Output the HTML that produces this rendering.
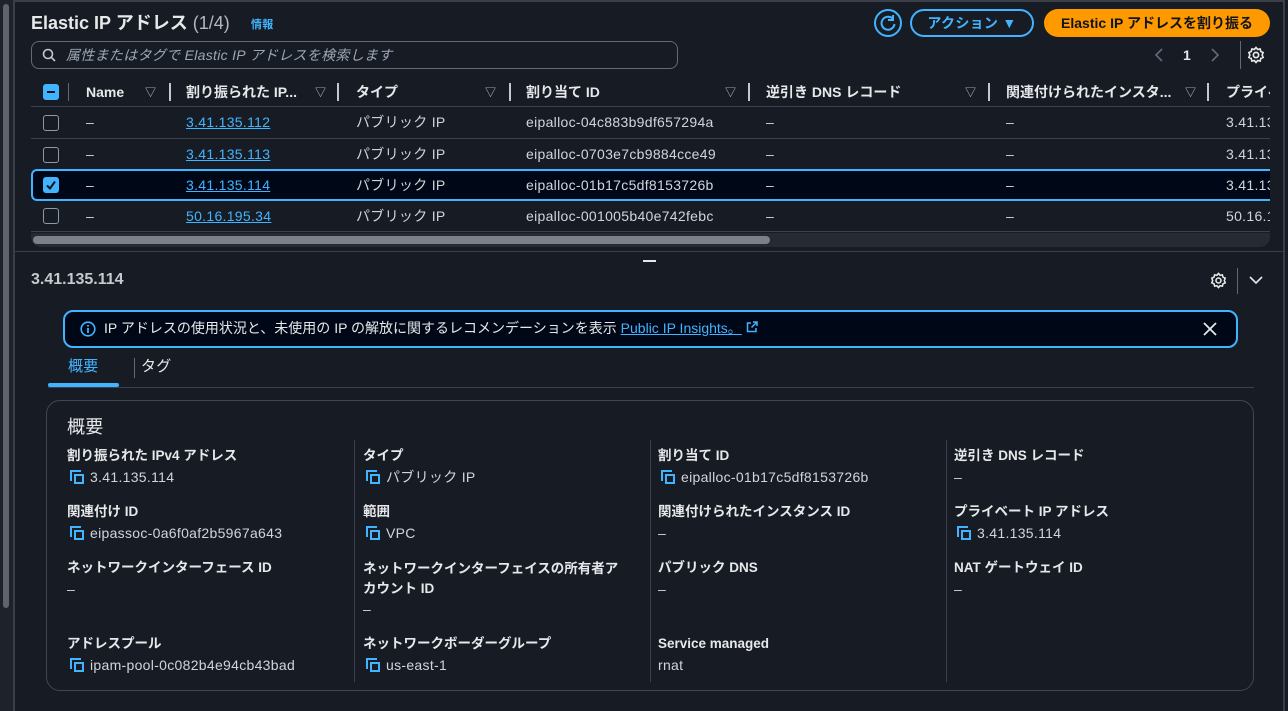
<!DOCTYPE html>
<html><head><meta charset="utf-8">
<style>
*{box-sizing:border-box;margin:0;padding:0}
body{width:1288px;height:711px;overflow:hidden;background:#171c24;color:#d1d5db;font-family:"Liberation Sans","Noto Sans CJK JP",sans-serif;font-size:14px;letter-spacing:.3px;position:relative;line-height:18px}
.a{position:absolute;white-space:nowrap;line-height:18px}
.lnk{color:#42b4ff;text-decoration:underline}
.b{font-weight:bold;color:#e6e8ea;letter-spacing:0}
.cb{position:absolute;width:16px;height:16px;border:1.5px solid #8d99a8;border-radius:3px;left:43px}
.sep{position:absolute;width:2px;height:18px;background:#c6c6cd;top:83px}
.tri{position:absolute;top:84px;font-size:11px;color:#c6c6cd}
.rowl{position:absolute;left:31px;width:1239px;height:1px;background:#3a404c}
.vl{position:absolute;width:1px;background:#3a404c;top:440px;height:242px}
.lab{font-weight:bold;color:#e6e8ea;font-size:13.5px;letter-spacing:0}
.cp{display:inline-block;width:14px;height:14px;position:relative;vertical-align:-2px;margin-right:6px}
.cp:before{content:"";position:absolute;left:0;top:0;width:9px;height:9px;border-left:2px solid #42b4ff;border-top:2px solid #42b4ff}
.cp:after{content:"";position:absolute;left:4px;top:4px;width:10px;height:10px;border:2px solid #42b4ff;box-sizing:border-box}
</style></head><body>
<div class="a" style="left:0;top:0;width:14px;height:711px;background:#1e232b"></div>
<div class="a" style="left:3px;top:4px;width:6px;height:604px;background:#5f636b;border-radius:3px"></div>
<div class="a" style="left:13px;top:0;width:2px;height:711px;background:#3a3f47"></div>
<div class="a" style="left:1283px;top:0;width:2px;height:711px;background:#3a3f47"></div>
<div class="a" style="left:13px;top:0;width:1272px;height:2px;background:#3a3f47"></div>

<div class="a" style="left:31px;top:12px;font-size:18px;line-height:22px;color:#e6e8ea;font-weight:bold;letter-spacing:0">Elastic IP アドレス <span style="font-weight:normal;color:#b4b8bd">(1/4)</span></div>
<div class="a" style="left:251px;top:16px;font-size:11px;color:#42b4ff;font-weight:bold">情報</div>

<svg class="a" style="left:873px;top:8px" width="30" height="30" viewBox="0 0 30 30"><circle cx="15" cy="15" r="13" fill="none" stroke="#42b4ff" stroke-width="2"/><path d="M20 11a6.5 6.5 0 1 0 1.5 5" fill="none" stroke="#42b4ff" stroke-width="2"/><path d="M20 7v5h-5" fill="none" stroke="#42b4ff" stroke-width="2"/></svg>
<div class="a" style="left:910px;top:9px;width:124px;height:28px;border:2px solid #42b4ff;border-radius:14px;color:#42b4ff;font-weight:bold;font-size:14px;text-align:center;line-height:24px">アクション ▼</div>
<div class="a" style="left:1044px;top:9px;width:226px;height:28px;background:#ff9900;border-radius:14px;color:#0f141a;font-weight:bold;font-size:14px;letter-spacing:0;text-align:center;line-height:28px">Elastic IP アドレスを割り振る</div>

<div class="a" style="left:31px;top:41px;width:647px;height:28px;border:1px solid #5f6b7a;border-radius:8px"></div>
<svg class="a" style="left:42px;top:48px" width="14" height="14" viewBox="0 0 14 14"><circle cx="6" cy="6" r="4.5" fill="none" stroke="#c6c6cd" stroke-width="1.6"/><path d="M9.3 9.3L13 13" stroke="#c6c6cd" stroke-width="1.6"/></svg>
<div class="a" style="left:66px;top:46px;font-style:italic;color:#9ba7b6;font-size:14px">属性またはタグで Elastic IP アドレスを検索します</div>

<svg class="a" style="left:1154px;top:47px" width="10" height="16" viewBox="0 0 10 16"><path d="M8 2L2 8l6 6" fill="none" stroke="#5f6b7a" stroke-width="1.6"/></svg>
<div class="a" style="left:1183px;top:46px;color:#e6e8ea;font-weight:bold">1</div>
<svg class="a" style="left:1210px;top:47px" width="10" height="16" viewBox="0 0 10 16"><path d="M2 2l6 6-6 6" fill="none" stroke="#5f6b7a" stroke-width="1.6"/></svg>
<div class="a" style="left:1240px;top:41px;width:1px;height:28px;background:#5f6b7a"></div>
<svg class="a" style="left:1247px;top:46px" width="18" height="18" viewBox="0 0 24 24"><path d="M12 2l2.2 2.6 3.3-.6.9 3.3 3.1 1.4-1.3 3.3 1.3 3.3-3.1 1.4-.9 3.3-3.3-.6L12 22l-2.2-2.6-3.3.6-.9-3.3-3.1-1.4L3.8 12 2.5 8.7l3.1-1.4.9-3.3 3.3.6z" fill="none" stroke="#e6e8ea" stroke-width="2.2"/><circle cx="12" cy="12" r="3.5" fill="none" stroke="#e6e8ea" stroke-width="2.2"/></svg>

<div class="a" style="left:43px;top:84px;width:16px;height:16px;background:#42b4ff;border-radius:3px"><div style="position:absolute;left:4px;top:7px;width:8px;height:2px;background:#0f141a"></div></div>
<div class="a" style="left:68px;top:83px;width:1px;height:18px;background:#5f6b7a"></div>
<div class="a b" style="left:86px;top:83px">Name</div><div class="tri" style="left:145px">▽</div><div class="sep" style="left:169px"></div>
<div class="a b" style="left:186px;top:83px">割り振られた IP...</div><div class="tri" style="left:315px">▽</div><div class="sep" style="left:337px"></div>
<div class="a b" style="left:356px;top:83px">タイプ</div><div class="tri" style="left:485px">▽</div><div class="sep" style="left:509px"></div>
<div class="a b" style="left:526px;top:83px">割り当て ID</div><div class="tri" style="left:725px">▽</div><div class="sep" style="left:748px"></div>
<div class="a b" style="left:766px;top:83px">逆引き DNS レコード</div><div class="tri" style="left:965px">▽</div><div class="sep" style="left:988px"></div>
<div class="a b" style="left:1006px;top:83px">関連付けられたインスタ...</div><div class="tri" style="left:1185px">▽</div><div class="sep" style="left:1207px"></div>
<div class="a b" style="left:1226px;top:83px;width:44px;overflow:hidden">プライベ</div>

<div class="rowl" style="top:106px"></div>
<div class="rowl" style="top:138px"></div>
<div class="rowl" style="top:231px"></div>
<div class="a" style="left:31px;top:169px;width:1239px;height:32px;background:#000716;border:2px solid #42b4ff;border-right:none;border-radius:6px 0 0 6px"></div>

<div class="cb" style="top:115px"></div>
<div class="cb" style="top:147px"></div>
<div class="a" style="left:43px;top:177px;width:16px;height:16px;background:#42b4ff;border-radius:3px"><svg width="16" height="16" viewBox="0 0 16 16" style="position:absolute;left:0;top:0"><path d="M4 8.5l3 3 5-7" fill="none" stroke="#0f141a" stroke-width="2"/></svg></div>
<div class="cb" style="top:208px"></div>

<div class="a" style="left:86px;top:113px">–</div><div class="a lnk" style="left:186px;top:113px">3.41.135.112</div><div class="a" style="left:356px;top:113px">パブリック IP</div><div class="a" style="left:526px;top:113px">eipalloc-04c883b9df657294a</div><div class="a" style="left:766px;top:113px">–</div><div class="a" style="left:1006px;top:113px">–</div><div class="a" style="left:1226px;top:113px;width:44px;overflow:hidden">3.41.135</div>
<div class="a" style="left:86px;top:145px">–</div><div class="a lnk" style="left:186px;top:145px">3.41.135.113</div><div class="a" style="left:356px;top:145px">パブリック IP</div><div class="a" style="left:526px;top:145px">eipalloc-0703e7cb9884cce49</div><div class="a" style="left:766px;top:145px">–</div><div class="a" style="left:1006px;top:145px">–</div><div class="a" style="left:1226px;top:145px;width:44px;overflow:hidden">3.41.135</div>
<div class="a" style="left:86px;top:176px">–</div><div class="a lnk" style="left:186px;top:176px">3.41.135.114</div><div class="a" style="left:356px;top:176px">パブリック IP</div><div class="a" style="left:526px;top:176px">eipalloc-01b17c5df8153726b</div><div class="a" style="left:766px;top:176px">–</div><div class="a" style="left:1006px;top:176px">–</div><div class="a" style="left:1226px;top:176px;width:44px;overflow:hidden">3.41.135</div>
<div class="a" style="left:86px;top:207px">–</div><div class="a lnk" style="left:186px;top:207px">50.16.195.34</div><div class="a" style="left:356px;top:207px">パブリック IP</div><div class="a" style="left:526px;top:207px">eipalloc-001005b40e742febc</div><div class="a" style="left:766px;top:207px">–</div><div class="a" style="left:1006px;top:207px">–</div><div class="a" style="left:1226px;top:207px;width:44px;overflow:hidden">50.16.195</div>

<div class="a" style="left:31px;top:233px;width:1239px;height:14px;background:#262b33;border-radius:0 0 10px 10px"></div>
<div class="a" style="left:33px;top:236px;width:737px;height:8px;background:#7d8187;border-radius:4px"></div>

<div class="a" style="left:13px;top:251px;width:1272px;height:1px;background:#3a3f47"></div>
<div class="a" style="left:643px;top:260px;width:13px;height:2px;background:#e6e8ea"></div>

<div class="a" style="left:31px;top:271px;font-size:16px;font-weight:bold;color:#c6c9cd;letter-spacing:0">3.41.135.114</div>
<svg class="a" style="left:1210px;top:272px" width="17" height="17" viewBox="0 0 24 24"><path d="M12 2l2.2 2.6 3.3-.6.9 3.3 3.1 1.4-1.3 3.3 1.3 3.3-3.1 1.4-.9 3.3-3.3-.6L12 22l-2.2-2.6-3.3.6-.9-3.3-3.1-1.4L3.8 12 2.5 8.7l3.1-1.4.9-3.3 3.3.6z" fill="none" stroke="#e6e8ea" stroke-width="2.2"/><circle cx="12" cy="12" r="3.5" fill="none" stroke="#e6e8ea" stroke-width="2.2"/></svg>
<div class="a" style="left:1237px;top:268px;width:1px;height:26px;background:#5f6b7a"></div>
<svg class="a" style="left:1249px;top:275px" width="14" height="10" viewBox="0 0 14 10"><path d="M1 2l6 6 6-6" fill="none" stroke="#e6e8ea" stroke-width="1.6"/></svg>

<div class="a" style="left:63px;top:310px;width:1175px;height:38px;background:#000716;border:2px solid #42b4ff;border-radius:10px"></div>
<svg class="a" style="left:80px;top:321px" width="16" height="16" viewBox="0 0 16 16"><circle cx="8" cy="8" r="6.8" fill="none" stroke="#42b4ff" stroke-width="1.6"/><path d="M8 7v5M8 4v1.6" stroke="#42b4ff" stroke-width="1.8"/></svg>
<div class="a" style="left:104px;top:319px;color:#e6e8ea;letter-spacing:0">IP アドレスの使用状況と、未使用の IP の解放に関するレコメンデーションを表示 <span class="lnk">Public IP Insights。</span><svg width="12" height="12" viewBox="0 0 12 12" style="margin-left:4px;vertical-align:0"><path d="M5 2H1.5v8.5H10V7M7 1h4v4M11 1L5.5 6.5" fill="none" stroke="#42b4ff" stroke-width="1.5"/></svg></div>
<svg class="a" style="left:1203px;top:322px" width="14" height="14" viewBox="0 0 14 14"><path d="M1 1l12 12M13 1L1 13" stroke="#e6e8ea" stroke-width="1.8"/></svg>

<div class="a" style="left:68px;top:358px;font-size:15px;color:#42b4ff">概要</div>
<div class="a" style="left:48px;top:383px;width:71px;height:4px;background:#42b4ff;border-radius:2px"></div>
<div class="a" style="left:134px;top:358px;width:1px;height:20px;background:#5f6b7a"></div>
<div class="a" style="left:141px;top:358px;font-size:15px;color:#e6e8ea">タグ</div>
<div class="a" style="left:48px;top:387px;width:1206px;height:1px;background:#3a404c"></div>

<div class="a" style="left:46px;top:400px;width:1208px;height:291px;border:1px solid #414750;border-radius:14px"></div>
<div class="a" style="left:67px;top:416px;font-size:18px;line-height:22px;color:#e6e8ea">概要</div>
<div class="vl" style="left:354px"></div><div class="vl" style="left:650px"></div><div class="vl" style="left:946px"></div>

<div class="a lab" style="left:67px;top:447px">割り振られた IPv4 アドレス</div><div class="a" style="left:70px;top:468px"><span class="cp"></span>3.41.135.114</div>
<div class="a lab" style="left:67px;top:503px">関連付け ID</div><div class="a" style="left:70px;top:524px"><span class="cp"></span>eipassoc-0a6f0af2b5967a643</div>
<div class="a lab" style="left:67px;top:559px">ネットワークインターフェース ID</div><div class="a" style="left:67px;top:580px">–</div>
<div class="a lab" style="left:67px;top:635px">アドレスプール</div><div class="a" style="left:70px;top:656px"><span class="cp"></span>ipam-pool-0c082b4e94cb43bad</div>

<div class="a lab" style="left:363px;top:447px">タイプ</div><div class="a" style="left:366px;top:468px"><span class="cp"></span>パブリック IP</div>
<div class="a lab" style="left:363px;top:503px">範囲</div><div class="a" style="left:366px;top:524px"><span class="cp"></span>VPC</div>
<div class="a lab" style="left:363px;top:559px;line-height:20px">ネットワークインターフェイスの所有者ア<br>カウント ID</div><div class="a" style="left:363px;top:600px">–</div>
<div class="a lab" style="left:363px;top:635px">ネットワークボーダーグループ</div><div class="a" style="left:366px;top:656px"><span class="cp"></span>us-east-1</div>

<div class="a lab" style="left:658px;top:447px">割り当て ID</div><div class="a" style="left:661px;top:468px"><span class="cp"></span>eipalloc-01b17c5df8153726b</div>
<div class="a lab" style="left:658px;top:503px">関連付けられたインスタンス ID</div><div class="a" style="left:658px;top:524px">–</div>
<div class="a lab" style="left:658px;top:559px">パブリック DNS</div><div class="a" style="left:658px;top:580px">–</div>
<div class="a lab" style="left:658px;top:635px">Service managed</div><div class="a" style="left:658px;top:656px">rnat</div>

<div class="a lab" style="left:954px;top:447px">逆引き DNS レコード</div><div class="a" style="left:954px;top:468px">–</div>
<div class="a lab" style="left:954px;top:503px">プライベート IP アドレス</div><div class="a" style="left:957px;top:524px"><span class="cp"></span>3.41.135.114</div>
<div class="a lab" style="left:954px;top:559px">NAT ゲートウェイ ID</div><div class="a" style="left:954px;top:580px">–</div>
</body></html>
